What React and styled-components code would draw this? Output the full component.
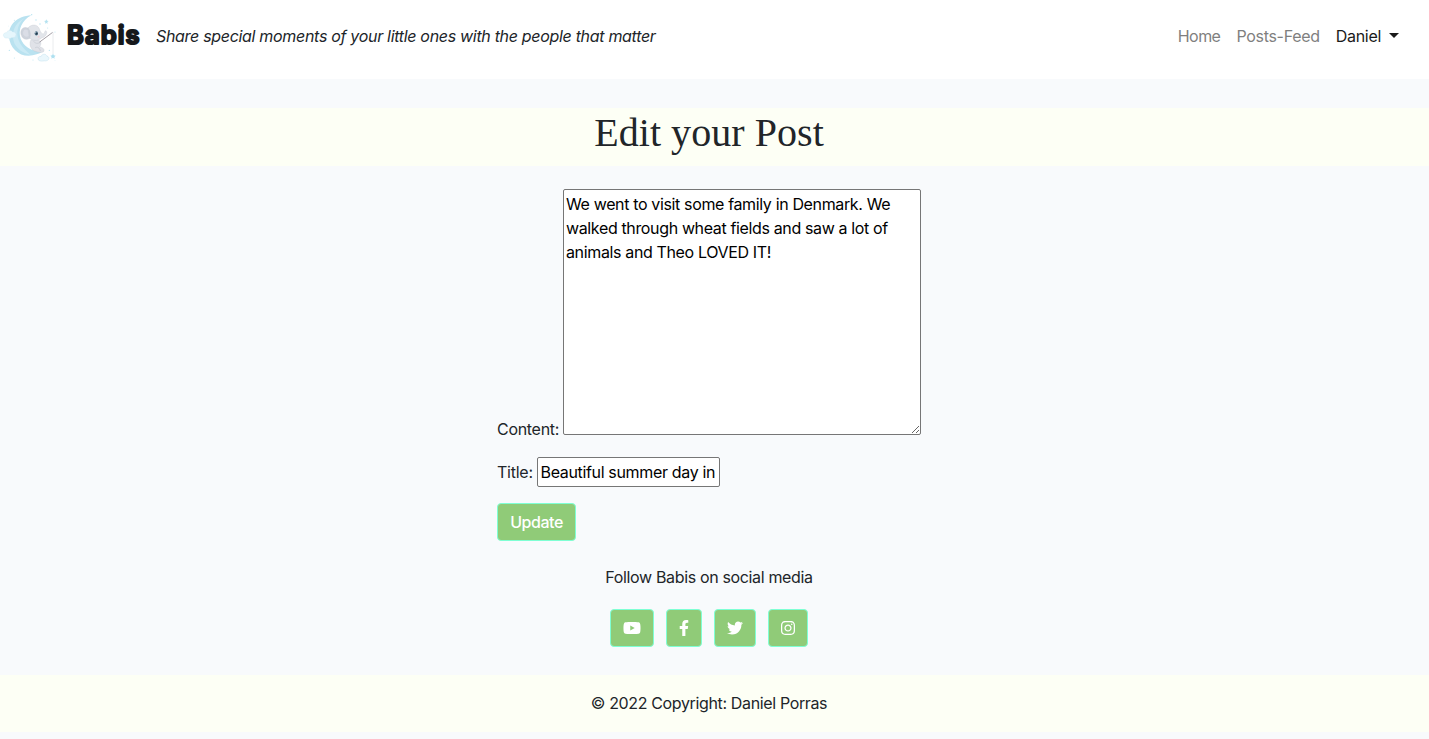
import React from "react";
import styled, { createGlobalStyle } from "styled-components";
import { FaYoutube, FaFacebookF, FaTwitter, FaInstagram } from "react-icons/fa";

const GlobalStyle = createGlobalStyle`
  *, *::before, *::after { box-sizing: border-box; }
  body {
    margin: 0;
    background: #f8fafc;
    color: #212529;
    font: 400 16px/24px Inter, "Liberation Sans", sans-serif;
  }
`;

const Page = styled.div`
  min-height: 739px;
`;

const Navbar = styled.header`
  display: flex;
  align-items: flex-start;
  height: 79px;
  padding: 12px 30px 0 0;
  background: #fff;
`;

const LogoArt = styled.svg`
  flex: none;
  width: 60px;
  height: 52px;
`;

const Wordmark = styled.svg`
  flex: none;
  width: 76px;
  height: 40px;
  margin-left: 5px;
  text {
    font: 600 25.5px Inter, sans-serif;
    fill: #16181b;
    stroke: #16181b;
    stroke-width: 2.2px;
    stroke-linejoin: round;
    stroke-linecap: round;
  }
`;

const Text = styled.span`
  letter-spacing: ${(p) => p.$spacing || 0}px;
  white-space: nowrap;
`;

const Tagline = styled(Text)`
  margin: 12px auto 0 15px;
  font-style: italic;
`;

const Nav = styled.nav`
  display: flex;
  gap: 16px;
  margin-top: 12px;
`;

const NavLink = styled(Text)`
  color: ${(p) => (p.$active ? "#1a1a1a" : "#7f7f7f")};
`;

const Caret = styled.span`
  display: inline-block;
  margin-left: 8px;
  vertical-align: 4px;
  border: 5px solid transparent;
  border-top-color: #1a1a1a;
  border-bottom: 0;
`;

const TitleBand = styled.div`
  height: 58px;
  margin-top: 29px;
  padding: 1px 11px 0 0;
  background: #fdfff5;
  text-align: center;
`;

const Heading = styled.h1`
  margin: 0;
  font: 400 40px/48px "Liberation Serif", serif;
  letter-spacing: ${(p) => p.$spacing}px;
`;

const Form = styled.form`
  display: flex;
  flex-direction: column;
  align-items: flex-start;
  width: 424px;
  margin: 23px 0 0 497px;
`;

const Field = styled.label`
  display: flex;
  align-items: center;
  justify-content: space-between;
  width: ${(p) => p.$width}px;
  height: ${(p) => p.$height}px;
  margin-bottom: ${(p) => p.$gap}px;
`;

const ContentLabel = styled(Text)`
  align-self: flex-end;
  margin-bottom: -6px;
`;

const ContentBox = styled.textarea`
  align-self: flex-start;
  width: 358px;
  height: 246px;
  padding: 2px;
  border: 1px solid #767676;
  border-radius: 2px;
  background: #fff;
  color: #000;
  font: inherit;
  letter-spacing: -0.36px;
  outline: none;
`;

const TitleInput = styled.input`
  width: 183px;
  height: 30px;
  padding: 1px 3px 1px 2.5px;
  border: 1px solid #767676;
  border-radius: 2px;
  background: #fff;
  color: #000;
  font: inherit;
  letter-spacing: -0.34px;
  outline: none;
`;

const Button = styled.button`
  display: flex;
  align-items: center;
  justify-content: center;
  width: ${(p) => p.$width}px;
  height: 38px;
  padding: 0;
  border: 1px solid #7fffd4;
  border-radius: 4px;
  background: #90cb78;
  color: #fff;
  font: inherit;
  font-weight: 500;
  svg {
    width: ${(p) => p.$icon}px;
    height: 16px;
  }
`;

const Social = styled.section`
  display: flex;
  flex-direction: column;
  align-items: center;
  height: 133px;
  padding: 24px 11px 0 0;
`;

const SocialRow = styled.div`
  display: flex;
  gap: 12px;
  margin-top: 20px;
`;

const Copyright = styled.footer`
  height: 57px;
  margin-top: 1px;
  padding: 16px 11px 0 0;
  background: #fdfff5;
  text-align: center;
`;

const MoonElephant = () => (
  <LogoArt viewBox="0 36 180 156" aria-hidden="true">
    <path d="M94 46C50 49 25 74 27 110C29 146 62 174 98 166C116 163 126 158 131 151C100 158 72 142 62 116C53 90 66 60 94 46Z" fill="#b9e2f0" />
    <path d="M74 54C42 70 32 100 43 130C51 146 68 160 91 164C64 142 50 120 52 94C54 77 62 63 74 54Z" fill="#cbeaf5" />
    <path d="M12 110C7 104 13 97 20 98C22 90 35 89 38 96C45 94 51 102 47 107C47 114 39 112 35 113C29 118 24 113 20 114C16 114 13 113 12 110Z" fill="#e6f6fc" stroke="#c4e4f0" />
    <path d="M114 177C113 171 119 168 123 170C126 160 139 161 141 169C147 169 149 177 144 180C139 184 134 182 129 183C123 184 115 183 114 177Z" fill="#eaf7fc" stroke="#a9d6e8" />
    <path d="M93 119C87 132 91 146 103 153C113 157 130 160 132 153C134 145 124 142 119 140C125 132 123 124 116 121Z" fill="#e0e2e8" stroke="#bdc1ca" />
    <path d="M82 86C92 72 110 72 117 84C121 94 124 103 131 101C136 99 132 93 138 92C144 97 137 112 126 113C116 122 103 124 91 116C80 110 77 96 82 86Z" fill="#e2e5ea" stroke="#c2c6ce" />
    <path d="M84 84C70 78 60 88 63 103C66 116 78 122 89 115C93 104 91 92 84 84Z" fill="#ced3dc" stroke="#bcc2cd" />
    <path d="M83 90C73 85 67 92 70 103C73 110 80 113 86 108Z" fill="#dadde6" />
    <ellipse cx="109" cy="100" rx="5" ry="6.5" fill="#53758a" />
    <circle cx="110" cy="101" r="3" fill="#25394b" />
    <circle cx="107" cy="98" r="1.4" fill="#fff" />
    <path d="M101 124C107 132 114 131 121 127M105 144C111 138 120 144 121 153" fill="none" stroke="#b9bec7" strokeWidth="1.5" />
    <circle cx="116" cy="110" r="3" fill="#eed1d5" />
    <path d="M119 126L158 97" stroke="#756e78" strokeWidth="2" />
    <path d="M159 97V163" stroke="#dfe3e6" strokeWidth="2" />
    <path d="M159 161l2.500 5 5.500 1-4 4 1 5-5-2.500-5 2.500 1-5-4-4 5.500-1Z" fill="#aee0f0" />
    <g fill="#b5e2f0">
      <path d="M139 58l2 4 5 1-4 3 1 5-4-2-4 2 1-5-4-3 5-1Z" />
      <path d="M108 56l1 3 3 1-3 1-1 3-1-3-3-1 3-1Z" />
      <circle cx="95" cy="44" r="2" /><circle cx="120" cy="72" r="2" />
      <circle cx="43" cy="61" r="1.500" /><circle cx="25" cy="78" r="1" />
      <circle cx="28" cy="151" r="2" /><circle cx="43" cy="174" r="1.500" />
      <circle cx="99" cy="180" r="1.500" /><circle cx="148" cy="151" r="2" />
      <circle cx="165" cy="96" r="1.500" /><circle cx="143" cy="84" r="1.500" />
      <circle cx="70" cy="177" r="1" /><circle cx="165" cy="181" r="1" />
    </g>
  </LogoArt>
);

const Brand = () => (
  <Wordmark>
    <text x="2" y="31.5" textLength="72.5" lengthAdjust="spacing">Babis</text>
  </Wordmark>
);

const socials = [
  { name: "YouTube", Icon: FaYoutube, width: 44, icon: 18 },
  { name: "Facebook", Icon: FaFacebookF, width: 36, icon: 10 },
  { name: "Twitter", Icon: FaTwitter, width: 42, icon: 16 },
  { name: "Instagram", Icon: FaInstagram, width: 40, icon: 14 },
];

export default function App() {
  return (
    <Page>
      <GlobalStyle />
      <Navbar>
        <MoonElephant />
        <Brand />
        <Tagline $spacing={-0.31}>
          Share special moments of your little ones with the people that matter
        </Tagline>
        <Nav>
          <NavLink $spacing={-0.55}>Home</NavLink>
          <NavLink $spacing={-0.3}>Posts-Feed</NavLink>
          <NavLink $active $spacing={-0.3}>
            Daniel
            <Caret />
          </NavLink>
        </Nav>
      </Navbar>
      <TitleBand>
        <Heading $spacing={0.05}>Edit your Post</Heading>
      </TitleBand>
      <Form onSubmit={(e) => e.preventDefault()}>
        <Field $width={424} $height={246} $gap={22}>
          <ContentLabel $spacing={-0.3}>Content:</ContentLabel>
          <ContentBox
            spellCheck={false}
            defaultValue="We went to visit some family in Denmark. We walked through wheat fields and saw a lot of animals and Theo LOVED IT!"
          />
        </Field>
        <Field $width={223} $height={30} $gap={16}>
          <Text $spacing={-0.25}>Title:</Text>
          <TitleInput spellCheck={false} defaultValue="Beautiful summer day in" />
        </Field>
        <Button $width={79}>
          <Text $spacing={-0.45}>Update</Text>
        </Button>
      </Form>
      <Social>
        <Text $spacing={-0.35}>Follow Babis on social media</Text>
        <SocialRow>
          {socials.map(({ name, Icon, width, icon }) => (
            <Button key={name} type="button" aria-label={name} $width={width} $icon={icon}>
              <Icon />
            </Button>
          ))}
        </SocialRow>
      </Social>
      <Copyright>
        <Text $spacing={-0.36}>© 2022 Copyright: Daniel Porras</Text>
      </Copyright>
    </Page>
  );
}
